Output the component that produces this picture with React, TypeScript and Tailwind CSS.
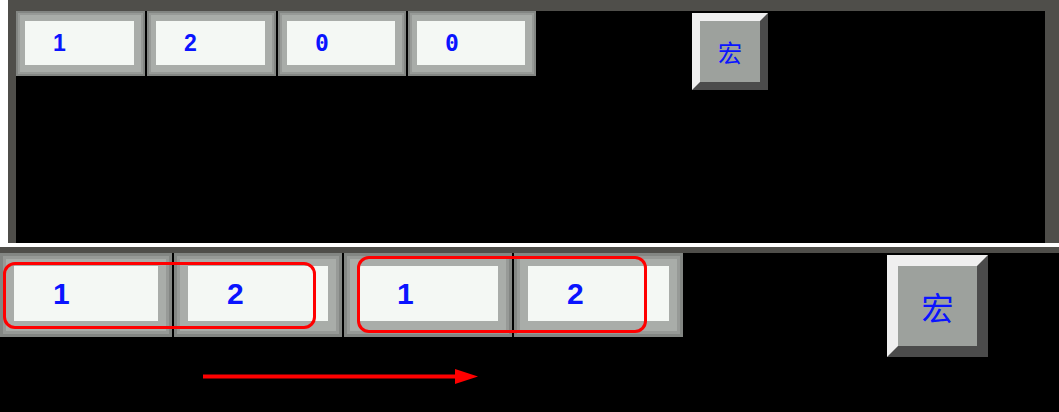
import React from "react";

type CellProps = {
  text: string;
  size: "sm" | "lg";
  w: string;
  mono?: boolean;
};

const Cell: React.FC<CellProps> = ({ text, size, w, mono }) => {
  const big = size === "lg";
  return (
    <div
      className={`${w} ${
        big
          ? "h-[84px] pt-[13px] pb-[16px] pl-[14px] pr-[14px] shadow-[inset_0_0_0_3px_#838683,inset_0_0_0_6px_#979a97]"
          : "h-[65px] pt-[10px] pb-[11px] pl-[9px] pr-[11px] shadow-[inset_0_0_0_2px_#838683,inset_0_0_0_4px_#979a97]"
      } bg-[#a9ada9] shrink-0`}
    >
      <div
        className={`h-full bg-[#f4f8f4] flex items-center text-[#0a14ff] font-bold ${
          big ? "pl-[39px] text-[30px]" : "pl-[28px] text-[23px]"
        } ${mono ? "font-['DejaVu_Sans_Mono',monospace]" : "font-['Liberation_Sans',Arial,sans-serif]"}`}
      >
        {text}
      </div>
    </div>
  );
};

const MacroButton: React.FC<{ big?: boolean }> = ({ big }) => (
  <div
    className={`${
      big
        ? "w-[101px] h-[102px] border-[11px] ml-[204px] mt-[2px] text-[32px]"
        : "w-[76px] h-[77px] border-[8px] ml-[156px] mt-[2px] text-[24px]"
    } border-t-[#efefef] border-l-[#efefef] border-b-[#4b4b4b] border-r-[#4b4b4b] bg-[#9da19d] flex items-center justify-center text-[#0a14ff] font-['Noto_Sans_CJK_SC',sans-serif] shrink-0`}
  >
    宏
  </div>
);

export default function App() {
  return (
    <div className="w-[1059px] h-[412px] bg-white overflow-hidden">
      {/* original panel */}
      <div className="ml-[8px] h-[243px] bg-[#4f4e4a] pt-[11px] pl-[8px] pr-[14px]">
        <div className="h-full bg-black flex items-start">
          <div className="flex gap-[2px]">
            <Cell text="1" size="sm" w="w-[129px]" />
            <Cell text="2" size="sm" w="w-[129px]" />
            <Cell text="0" size="sm" w="w-[128px]" mono />
            <Cell text="0" size="sm" w="w-[128px]" mono />
          </div>
          <MacroButton />
        </div>
      </div>

      {/* enlarged panel */}
      <div className="mt-[4px] h-[165px] bg-black border-t-[6px] border-[#4f4e4a] relative flex items-start">
        <div className="flex gap-[2px]">
          <Cell text="1" size="lg" w="w-[172px]" />
          <Cell text="2" size="lg" w="w-[168px]" />
          <Cell text="1" size="lg" w="w-[168px]" />
          <Cell text="2" size="lg" w="w-[169px]" />
        </div>
        <MacroButton big />

        <div className="absolute left-[3px] top-[9px] w-[313px] h-[67px] rounded-[12px] border-[3px] border-[#ff0000]" />
        <div className="absolute left-[357px] top-[3px] w-[290px] h-[77px] rounded-[12px] border-[3px] border-[#ff0000]" />

        <svg className="absolute left-[200px] top-[114px]" width="282" height="20" viewBox="0 0 282 20">
          <line x1="3" y1="9.5" x2="258" y2="9.5" stroke="#ff0000" strokeWidth="4" />
          <polygon points="255,2 278,9.5 255,17" fill="#ff0000" />
        </svg>
      </div>
    </div>
  );
}
